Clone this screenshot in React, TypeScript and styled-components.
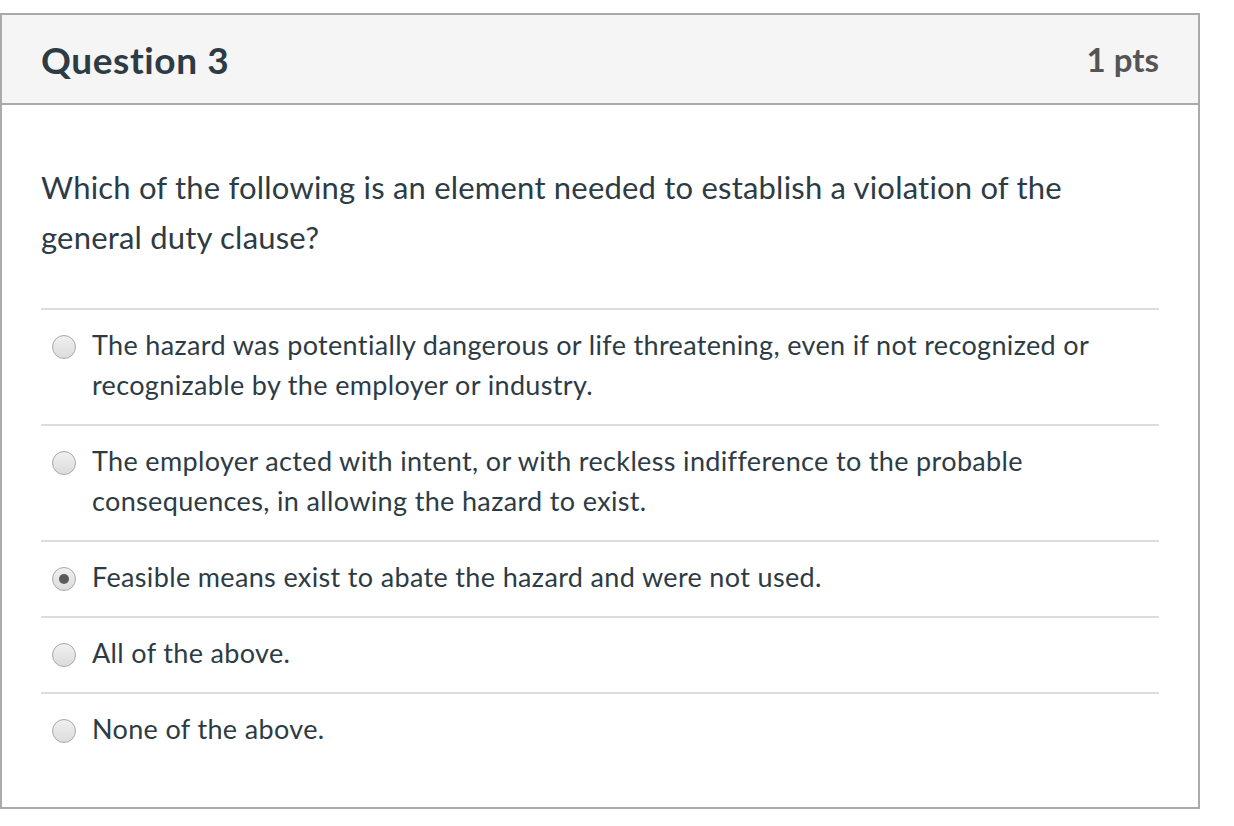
import styled, { createGlobalStyle } from "styled-components";

const GlobalStyle = createGlobalStyle`
  html, body {
    margin: 0;
    padding: 0;
    background: #ffffff;
  }
  body {
    font-family: Lato, "Liberation Sans", sans-serif;
    font-variant-ligatures: none;
    color: #2d3b45;
  }
`;

const ANSWERS = [
  "The hazard was potentially dangerous or life threatening, even if not recognized or recognizable by the employer or industry.",
  "The employer acted with intent, or with reckless indifference to the probable consequences, in allowing the hazard to exist.",
  "Feasible means exist to abate the hazard and were not used.",
  "All of the above.",
  "None of the above.",
];

export default function App() {
  const selected = 2;
  return (
    <>
      <GlobalStyle />
      <Page>
        <Card>
          <Header>
            <Title>Question 3</Title>
            <Points>1 pts</Points>
          </Header>
          <Body>
            <QuestionText>
              Which of the following is an element needed to establish a violation of the general duty
              clause?
            </QuestionText>
            <AnswerList>
              {ANSWERS.map((text, i) => (
                <Answer key={i}>
                  <Radio type="radio" name="q3" defaultChecked={i === selected} />
                  <AnswerText>{text}</AnswerText>
                </Answer>
              ))}
            </AnswerList>
          </Body>
        </Card>
      </Page>
    </>
  );
}

const Page = styled.div`
  padding-top: 13px;
`;

const Card = styled.div`
  width: 1200px;
  box-sizing: border-box;
  border: 2px solid #aaaaaa;
  background: #ffffff;
`;

const Header = styled.div`
  display: flex;
  align-items: center;
  justify-content: space-between;
  height: 88px;
  padding: 0 39px 0 39px;
  background: #f5f5f5;
  border-bottom: 2px solid #aaaaaa;
`;

const Title = styled.div`
  font-size: 37px;
  font-weight: 700;
  letter-spacing: 0.6px;
  color: #2d3b45;
`;

const Points = styled.div`
  font-size: 33px;
  font-weight: 700;
  color: #555555;
`;

const Body = styled.div`
  padding: 57px 39px 39px 39px;
`;

const QuestionText = styled.div`
  font-size: 31px;
  line-height: 50px;
  letter-spacing: 0.2px;
  margin-bottom: 46px;
  max-width: 1090px;
`;

const AnswerList = styled.div`
  display: flex;
  flex-direction: column;
`;

const Answer = styled.label`
  display: flex;
  align-items: flex-start;
  gap: 16px;
  padding: 15px 0 19px 11px;
  border-top: 2px solid #dddddd;
`;

const Radio = styled.input`
  appearance: none;
  flex: none;
  width: 24px;
  height: 24px;
  margin: 10px 0 0 0;
  border-radius: 50%;
  border: 1px solid #a8a8a8;
  box-sizing: border-box;
  background: linear-gradient(#f0f0f0, #dcdcdc);
  position: relative;

  &:checked::after {
    content: "";
    position: absolute;
    left: 50%;
    top: 50%;
    width: 10px;
    height: 10px;
    margin: -5px 0 0 -5px;
    border-radius: 50%;
    background: #5a5a5a;
  }
`;

const AnswerText = styled.div`
  font-size: 27px;
  line-height: 40px;
  letter-spacing: 0.35px;
  max-width: 1040px;
`;
